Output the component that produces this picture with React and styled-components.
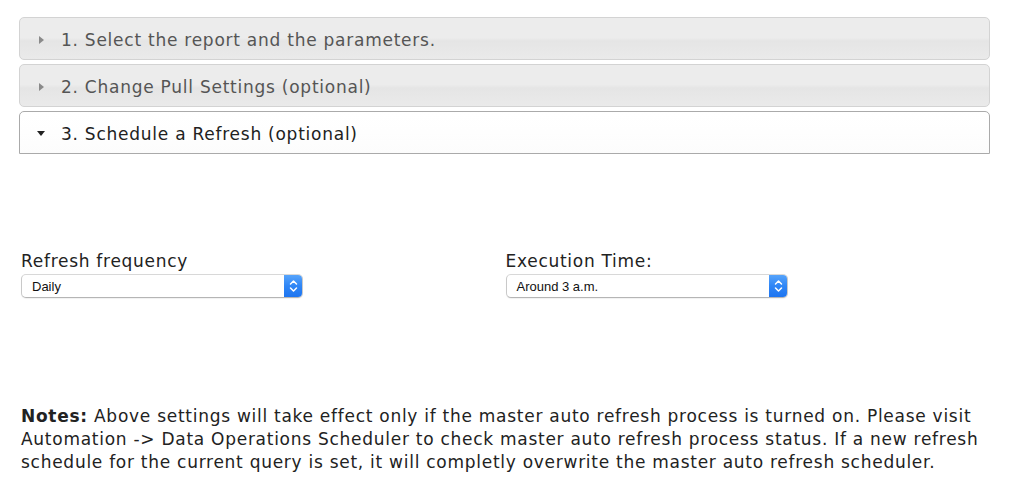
import React from "react";
import styled, { createGlobalStyle } from "styled-components";

const Global = createGlobalStyle`
  html, body { margin: 0; padding: 0; background: #fff; }
  body { font-family: "DejaVu Sans", Verdana, sans-serif; color: #222; }
`;

const Page = styled.div`
  width: 1024px;
  padding: 17px 34px 0 19px;
  box-sizing: border-box;
`;

const Accordion = styled.div`
  display: flex;
  flex-direction: column;
  gap: 4px;
`;

const Header = styled.div`
  display: flex;
  align-items: center;
  gap: 16px;
  height: 43px;
  box-sizing: border-box;
  padding: 2px 0 0 17px;
  border: 1px solid ${(p) => (p.$active ? "#aaaaaa" : "#d3d3d3")};
  border-radius: 5px;
  background: ${(p) =>
    p.$active
      ? "linear-gradient(to bottom, #ffffff 0%, #fefefe 50%, #fcfcfc 100%)"
      : "linear-gradient(to bottom, #ececec 0%, #ececec 48%, #e5e5e5 56%, #eaeaea 100%)"};
  color: ${(p) => (p.$active ? "#212121" : "#555555")};
  font-size: 17px;
  letter-spacing: 0.75px;
  ${(p) => p.$active && "border-bottom-left-radius: 0; border-bottom-right-radius: 0;"}
`;

const Arrow = styled.span`
  width: 8px;
  height: 8px;
  display: flex;
  align-items: center;
  justify-content: center;
`;

const Settings = styled.div`
  display: grid;
  grid-template-columns: 1fr 1fr;
  padding: 97px 0 0 2px;
`;

const Field = styled.div`
  display: flex;
  flex-direction: column;
`;

const Label = styled.label`
  font-size: 17px;
  line-height: 20px;
  letter-spacing: 0.72px;
  color: #222;
  margin-bottom: 3px;
`;

const SelectBox = styled.div`
  width: 282px;
  height: 24px;
  box-sizing: border-box;
  display: flex;
  align-items: stretch;
  border: 1px solid #c9c9c9;
  border-top-color: #d8d8d8;
  border-bottom-color: #b5b5b5;
  border-radius: 5px;
  background: #fff;
  box-shadow: 0 1px 1px rgba(0, 0, 0, 0.06);
  overflow: hidden;
  font-family: "Liberation Sans", Arial, sans-serif;
  font-size: 13px;
  color: #111;
`;

const SelectText = styled.span`
  flex: 1;
  display: flex;
  align-items: center;
  padding-left: 10px;
`;

const SelectButton = styled.span`
  width: 19px;
  display: flex;
  align-items: center;
  justify-content: center;
  background: linear-gradient(to bottom, #5aa6fb 0%, #2f86f6 50%, #1c73f0 100%);
  margin: -1px -1px -1px 0;
`;

const Notes = styled.p`
  margin: 107px 0 0 2px;
  font-size: 17px;
  line-height: 23px;
  letter-spacing: 0.73px;
  color: #222;
`;

const Caret = ({ down }) =>
  down ? (
    <svg width="8" height="5" viewBox="0 0 8 5">
      <polygon points="0,0 8,0 4,5" fill="#222" />
    </svg>
  ) : (
    <svg width="5" height="8" viewBox="0 0 5 8">
      <polygon points="0,0 5,4 0,8" fill="#8a8a8a" />
    </svg>
  );

const Chevrons = () => (
  <svg width="9" height="14" viewBox="0 0 9 14">
    <polyline points="1.5,5 4.5,2 7.5,5" fill="none" stroke="#fff" strokeWidth="1.5" strokeLinecap="round" strokeLinejoin="round" />
    <polyline points="1.5,9 4.5,12 7.5,9" fill="none" stroke="#fff" strokeWidth="1.5" strokeLinecap="round" strokeLinejoin="round" />
  </svg>
);

const sections = [
  { title: "1. Select the report and the parameters.", active: false },
  { title: "2. Change Pull Settings (optional)", active: false },
  { title: "3. Schedule a Refresh (optional)", active: true },
];

const Select = ({ value }) => (
  <SelectBox>
    <SelectText>{value}</SelectText>
    <SelectButton>
      <Chevrons />
    </SelectButton>
  </SelectBox>
);

export default function App() {
  return (
    <Page>
      <Global />
      <Accordion>
        {sections.map((s) => (
          <Header key={s.title} $active={s.active}>
            <Arrow>
              <Caret down={s.active} />
            </Arrow>
            <span>{s.title}</span>
          </Header>
        ))}
      </Accordion>
      <Settings>
        <Field>
          <Label>Refresh frequency</Label>
          <Select value="Daily" />
        </Field>
        <Field>
          <Label>Execution Time:</Label>
          <Select value="Around 3 a.m." />
        </Field>
      </Settings>
      <Notes>
        <b>Notes:</b> Above settings will take effect only if the master auto refresh
        process is turned on. Please visit Automation -&gt; Data Operations Scheduler to
        check master auto refresh process status. If a new refresh schedule for the current
        query is set, it will completly overwrite the master auto refresh scheduler.
      </Notes>
    </Page>
  );
}
